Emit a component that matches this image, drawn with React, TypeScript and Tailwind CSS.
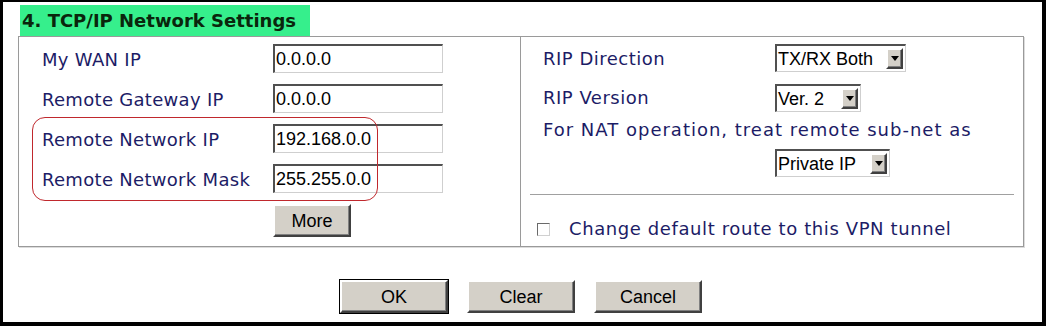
import React from 'react';

const label = "font-['DejaVu_Sans',sans-serif] text-[18px] text-[#1c1c66] leading-none whitespace-nowrap";
const field = "font-['Liberation_Sans',Arial,sans-serif] text-[18px] text-black leading-none";
const sunken = 'bg-white border-t-2 border-l-2 border-b border-r border-t-[#505050] border-l-[#505050] border-b-[#cfcfcf] border-r-[#cfcfcf]';
const raised = 'bg-[#d4d0c8] border-t-2 border-l-2 border-b-2 border-r-2 border-t-white border-l-white border-b-[#404040] border-r-[#404040] shadow-[inset_-1px_-1px_0_#808080]';

const TextBox = ({ value }: { value: string }) => (
  <div className={`${sunken} ${field} h-[29px] w-[170px] flex items-center pl-[1px]`}>{value}</div>
);

const Select = ({ value, width }: { value: string; width: string }) => (
  <div className={`${sunken} ${field} h-[28px] ${width} flex items-center justify-between pl-[1px] pr-[2px]`}>
    <span>{value}</span>
    <div className={`${raised} w-[17px] h-[21px] flex items-center justify-center`}>
      <svg width="8" height="5" viewBox="0 0 8 5">
        <path d="M0 0h8L4 5z" fill="#000" />
      </svg>
    </div>
  </div>
);

const Button = ({ text, def, width }: { text: string; def?: boolean; width: string }) => (
  <button
    className={`${raised} ${field} ${width} h-[33px] flex items-center justify-center ${def ? 'outline outline-1 outline-black' : ''}`}
  >
    {text}
  </button>
);

const leftRows = [
  { name: 'My WAN IP', value: '0.0.0.0' },
  { name: 'Remote Gateway IP', value: '0.0.0.0' },
  { name: 'Remote Network IP', value: '192.168.0.0' },
  { name: 'Remote Network Mask', value: '255.255.0.0' },
];

export default function App() {
  return (
    <div className="relative w-[1046px] h-[326px] bg-white border-t-2 border-l-[3px] border-r-4 border-b-4 border-black flex flex-col">
      <div className="ml-[17px] mt-[3px] h-[31px] w-[290px] bg-[#36ef8c] flex items-center pl-[2px]">
        <span className="font-['DejaVu_Sans',sans-serif] font-bold text-[18px] text-[#0a260c] leading-none">
          4. TCP/IP Network Settings
        </span>
      </div>

      <div className="ml-[15px] w-[1006px] h-[211px] flex border border-[#9a9a9a] shadow-[1px_1px_0_#dcdcdc]">
        {/* left panel */}
        <div className="w-[502px] border-r border-[#9a9a9a] pt-[7px] pl-[23px] flex flex-col gap-[11px]">
          {leftRows.map((r) => (
            <div key={r.name} className="flex items-center h-[29px]">
              <div className={`${label} tracking-[0.3px] w-[231px] pt-[2px]`}>{r.name}</div>
              <TextBox value={r.value} />
            </div>
          ))}
          <div className="pl-[231px]">
            <Button text="More" width="w-[78px]" />
          </div>
        </div>

        {/* right panel */}
        <div className="flex-1 flex flex-col">
          <div className="mt-[7px] h-[28px] pl-[22px] flex items-center">
            <div className={`${label} tracking-[0.5px] w-[232px] pt-[2px]`}>RIP Direction</div>
            <Select value="TX/RX Both" width="w-[131px]" />
          </div>
          <div className="mt-[12px] h-[28px] pl-[22px] flex items-center">
            <div className={`${label} tracking-[0.5px] w-[232px]`}>RIP Version</div>
            <Select value="Ver. 2" width="w-[86px]" />
          </div>
          <div className={`${label} tracking-[1px] mt-[8px] h-[20px] pl-[22px] flex items-center`}>
            For NAT operation, treat remote sub-net as
          </div>
          <div className="mt-[9px] h-[28px] pl-[254px] flex items-center">
            <Select value="Private IP" width="w-[115px]" />
          </div>
          <div className="mt-[17px] mx-[9px] h-[2px] border-t border-[#a0a0a0] border-b border-b-white" />
          <div className="mt-[23px] h-[20px] pl-[16px] flex items-center gap-[19px]">
            <div className="w-[13px] h-[13px] bg-white border-t border-l border-[#6a6a6a] border-b border-r border-b-[#d0d0d0] border-r-[#d0d0d0]" />
            <span className={`${label} tracking-[0.6px]`}>Change default route to this VPN tunnel</span>
          </div>
        </div>
      </div>

      <div className="mt-[33px] pl-[337px] flex gap-[19px]">
        <Button text="OK" def width="w-[108px]" />
        <Button text="Clear" width="w-[108px]" />
        <Button text="Cancel" width="w-[108px]" />
      </div>

      {/* red highlight annotation */}
      <div className="absolute left-[29px] top-[115px] w-[346px] h-[84px] rounded-[13px] border border-[#c0282d] pointer-events-none" />
    </div>
  );
}
